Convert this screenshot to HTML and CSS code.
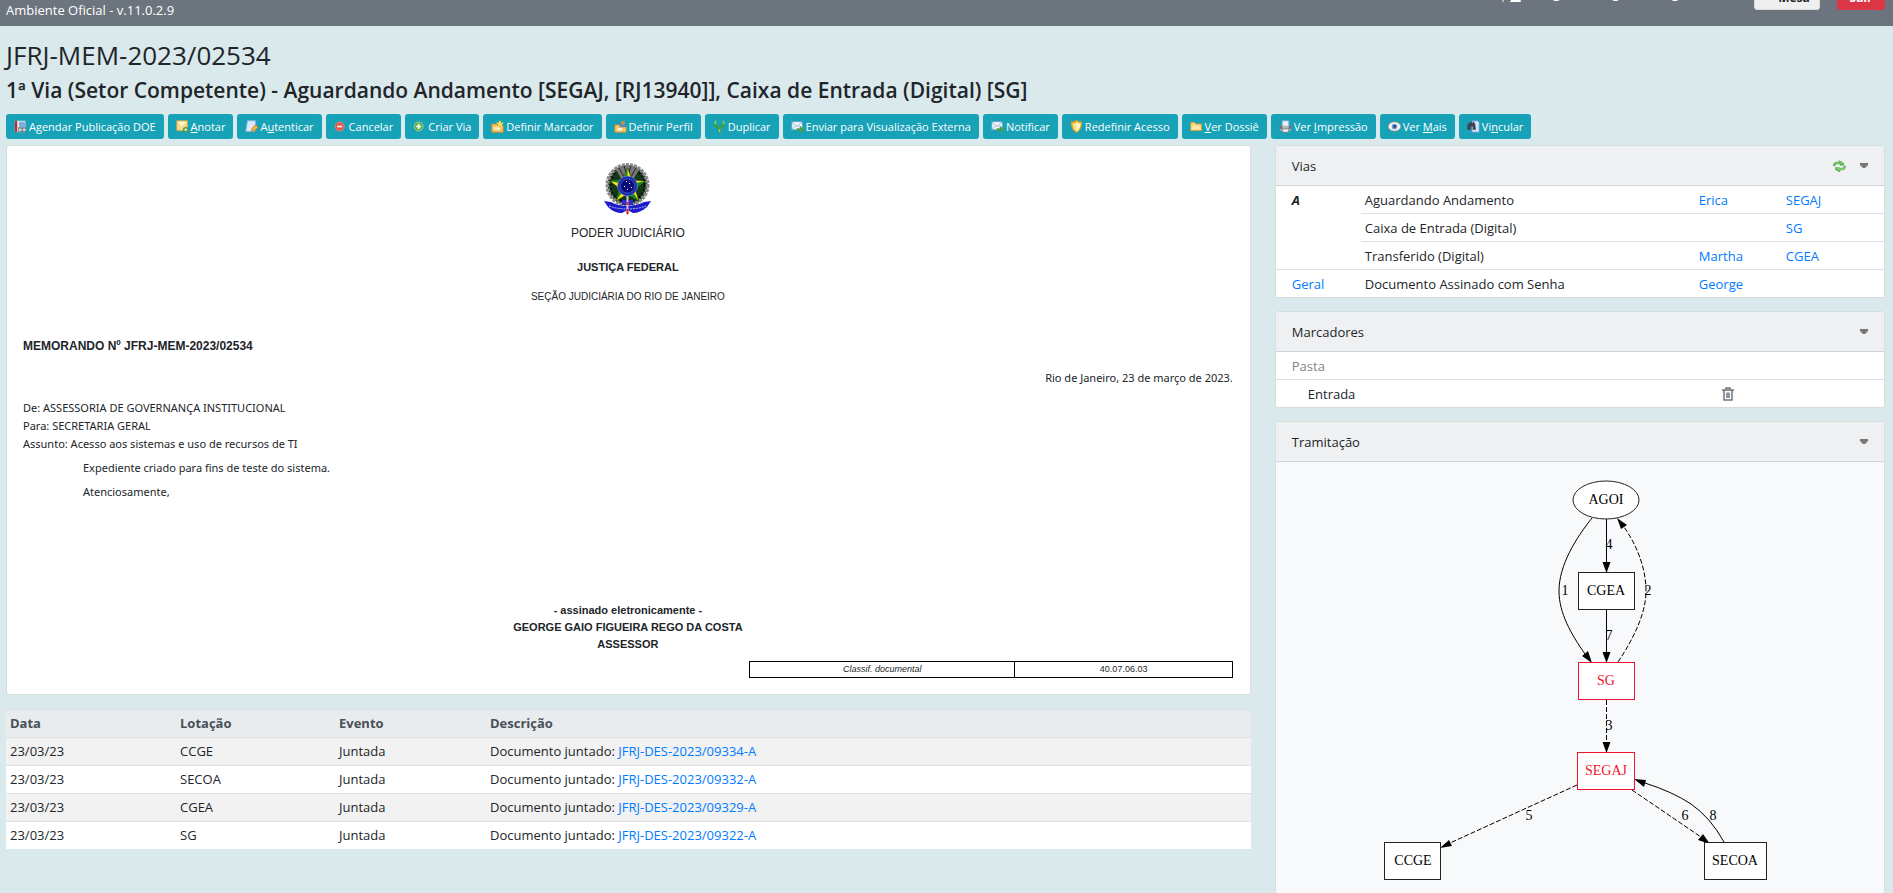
FILE: index.html
```
<!DOCTYPE html>
<html lang="pt-BR">
<head>
<meta charset="utf-8">
<title>JFRJ-MEM-2023/02534</title>
<link rel="stylesheet" href="styles.css">
</head>
<body>
<header class="topbar">
  <span class="env">Ambiente Oficial - v.11.0.2.9</span>
  <div class="user">
    <svg class="user-icon" viewBox="0 0 20 12" aria-hidden="true"><path d="M1 0V12" stroke="#fff"/><path d="M10 8h8l1 4H8z" fill="#fff"/></svg>
    <span class="name"><span>g</span><span>g</span><span>g</span></span>
    <button class="top-btn light" type="button"><svg viewBox="0 0 11 12" aria-hidden="true"><path d="M2 2h7v8h2v2H0v-2h2z" fill="#212529"/></svg><b>Mesa</b></button>
    <button class="top-btn danger" type="button"><b>Sair</b></button>
  </div>
</header>
<main class="page">
  <h1 class="title">JFRJ-MEM-2023/02534</h1>
  <h2 class="subtitle">1ª Via (Setor Competente) - Aguardando Andamento [SEGAJ, [RJ13940]], Caixa de Entrada (Digital) [SG]</h2>
  <nav class="actions">
    <button class="btn" type="button"><svg viewBox="0 0 16 16"><rect x="1" y="1" width="13" height="14" fill="#f4f6f8"/><rect x="1" y="1" width="3" height="14" fill="#b5303a"/><rect x="6" y="2" width="8" height="7" fill="#7fb0d8"/><path d="M5 9h10v6H5z" fill="#6d7680"/><circle cx="7.500" cy="12" r="2" fill="#ccd5dd"/><circle cx="12.500" cy="12" r="2" fill="#ccd5dd"/></svg>Agendar Publicação DOE</button>
    <button class="btn" type="button"><svg viewBox="0 0 16 16"><path d="M1 1h13v12H1z" fill="#f7d88c" stroke="#e5a93c"/><path d="M2 2h11L7 8z" fill="#fdf3d3"/><circle cx="12" cy="12" r="3.500" fill="#4d9b46"/><path d="M12 10v4M10 12h4" stroke="#fff"/></svg><span><u>A</u>notar</span></button>
    <button class="btn" type="button"><svg viewBox="0 0 16 16"><path d="M3 1h10l-1 13H1z" fill="#dbeafc" stroke="#8fb3e0"/><path d="M8 14l1-4 4-4 3 3-4 4z" fill="#f3b53f" stroke="#c77e1f"/></svg><span>A<u>u</u>tenticar</span></button>
    <button class="btn" type="button"><svg viewBox="0 0 16 16"><circle cx="7" cy="8" r="5.500" fill="#e4564c" stroke="#f08a80"/><path d="M4 8h6" stroke="#fff" stroke-width="2"/></svg>Cancelar</button>
    <button class="btn" type="button"><svg viewBox="0 0 16 16"><circle cx="7" cy="8" r="5.500" fill="#5fae50" stroke="#a5d898"/><path d="M4 8h6M7 5v6" stroke="#fff" stroke-width="2"/></svg>Criar Via</button>
    <button class="btn" type="button"><svg viewBox="0 0 16 16"><path d="M1 5h6l1 2h7v8H1z" fill="#f5c767" stroke="#d08b2c"/><path d="M4 9h7v3H4z" fill="#fff3cf"/><path d="M11 0l1.500 3 3.500.5-2.500 2 .5 3.500-3-2-3 2 .5-3.500-2.500-2 3.500-.5z" fill="#fbdc4c"/></svg>Definir Marcador</button>
    <button class="btn" type="button"><svg viewBox="0 0 16 16"><path d="M1 6h6l1 2h7v7H1z" fill="#f5c767" stroke="#d08b2c"/><path d="M4 10h6v3H4z" fill="#fff3cf"/><path d="M7 9q0-4 4-4t4 4z" fill="#5887c4"/><circle cx="11" cy="3.500" r="2.500" fill="#c98a56"/></svg>Definir Perfil</button>
    <button class="btn" type="button"><svg viewBox="0 0 16 16"><path d="M8 15V10Q3 9 3 3M8 10Q13 9 13 3" fill="none" stroke="#3f9f3a" stroke-width="3"/><path d="M3 1v4M13 1v4M8 11v4" stroke="#8ad06a" stroke-width="2"/></svg>Duplicar</button>
    <button class="btn" type="button"><svg viewBox="0 0 16 16"><path d="M1 2h13v10H1z" fill="#f5f9fd" stroke="#6f9bc8"/><path d="M1 2l6 6 7-6M1 12l5-5M14 12L9 7" fill="none" stroke="#7ba3cf"/><path d="M7 10h4V7l5 4.500-5 4.500v-3H7z" fill="#4da043"/></svg>Enviar para Visualização Externa</button>
    <button class="btn" type="button"><svg viewBox="0 0 16 16"><path d="M1 2h13v10H1z" fill="#f5f9fd" stroke="#6f9bc8"/><path d="M1 2l6 6 7-6M1 12l5-5M14 12L9 7" fill="none" stroke="#7ba3cf"/><path d="M7 10h4V7l5 4.500-5 4.500v-3H7z" fill="#4da043"/></svg>Notificar</button>
    <button class="btn" type="button"><svg viewBox="0 0 16 16"><path d="M1 2q4 0 7-2 3 2 7 2 0 10-7 14Q1 12 1 2z" fill="#e0a021"/><path d="M3 4q3 0 5-2 2 2 5 2 0 7-5 10Q3 11 3 4z" fill="#ffe27a"/><path d="M8 2q2 2 5 2 0 7-5 10z" fill="#fff6d0"/></svg>Redefinir Acesso</button>
    <button class="btn" type="button"><svg viewBox="0 0 16 16"><path d="M1 3h5l1 2h7v8H1z" fill="#f8d877" stroke="#dfa532"/><path d="M2 7h11v5H2z" fill="#fce9a6"/></svg><span><u>V</u>er Dossiê</span></button>
    <button class="btn" type="button"><svg viewBox="0 0 16 16"><path d="M4 1h8v7H4z" fill="#e8f1fb" stroke="#8fb0d8"/><path d="M1 7h14v6H1z" fill="#b4b7bd"/><path d="M1 7h3v4H1zM12 7h3v4h-3z" fill="#6b6f78"/><path d="M4 11h8v4H4z" fill="#f4f4f4" stroke="#777"/></svg><span>Ver <u>I</u>mpressão</span></button>
    <button class="btn" type="button"><svg viewBox="0 0 16 16"><ellipse cx="8" cy="8" rx="7.500" ry="5.500" fill="#f8f8f8" stroke="#c9a183"/><circle cx="8" cy="8" r="3.500" fill="#6e9ad6"/><circle cx="8" cy="8" r="1.500" fill="#17335f"/></svg><span>Ver <u>M</u>ais</span></button>
    <button class="btn" type="button"><svg viewBox="0 0 16 16"><path d="M6 1h7l2 2v12H6z" fill="#d5e6fb" stroke="#5f93d3"/><path d="M1 4h3v-2h2v2h1v-2h2v2h1l1 8H7V8H5v4H0z" fill="#3d4552"/></svg><span>Vi<u>n</u>cular</span></button>
  </nav>
  <div class="columns">
    <div class="main-col">
      <article class="card memo">
        <div class="memo-head">
          <svg class="crest" viewBox="0 0 47 52" role="img" aria-label="Brasão da República">
            <circle cx="23.500" cy="22" r="20" fill="#123a17" stroke="#8a8a8a" stroke-width="4" stroke-dasharray="3 1"/>
            <circle cx="23.500" cy="22" r="17" fill="none" stroke="#0b0b0b" stroke-width="2" stroke-dasharray="2 2"/>
            <path d="M12 7Q24-3 35 7L30 15H17z" fill="#777"/><path d="M15 5l5 9M32 5l-5 9M20 3l3 9M27 3l-3 9" stroke="#222"/>
            <path d="M23.500 5L28 17 41 18 31 26 35 38 23.500 31 12 38 16 26 6 18 19 17z" fill="#ffe900" stroke="#222" stroke-width=".5"/>
            <path d="M23.500 5V22L19 17zM41 18L23.500 22 31 26zM35 38L23.500 22V31zM12 38L23.500 22 16 26zM6 18L23.500 22 19 17z" fill="#0a8a2a"/>
            <circle cx="23.500" cy="23" r="10" fill="#1b2fa8" stroke="#8fa0ff" stroke-width=".5"/>
            <circle cx="23.500" cy="23" r="7" fill="#0a0a78" stroke="#5f70e0" stroke-width=".5"/>
            <path d="M22 18h1v1h-1zM25 20h1v1h-1zM20 23h1v1h-1zM27 24h1v1h-1zM23 26h1v1h-1z" fill="#fff"/>
            <path d="M0 38l7 1q7 4 16 4t17-4l7-1-4 6q-7 6-14 6l-5.500-3-5.500 3q-8 0-14-6z" fill="#1c1cc8"/>
            <path d="M5 43q8 3 18.500 3T42 43" fill="none" stroke="#b9c2ff" stroke-dasharray="2 1"/>
            <path d="M18 37h11v5H18z" fill="#2a2ad0"/><path d="M23.500 33V52" stroke="#c9c9e8" stroke-width="2"/><path d="M23.500 39v3M23.500 46v5" stroke="#d22" stroke-width="2"/>
          </svg>
          <p class="h-power">PODER JUDICIÁRIO</p>
          <p class="h-court">JUSTIÇA FEDERAL</p>
          <p class="h-section">SEÇÃO JUDICIÁRIA DO RIO DE JANEIRO</p>
        </div>
        <p class="memo-no">MEMORANDO Nº JFRJ-MEM-2023/02534</p>
        <p class="memo-date">Rio de Janeiro, 23 de março de 2023.</p>
        <div class="memo-meta">
          <p>De: ASSESSORIA DE GOVERNANÇA INSTITUCIONAL</p>
          <p>Para: SECRETARIA GERAL</p>
          <p>Assunto: Acesso aos sistemas e uso de recursos de TI</p>
        </div>
        <div class="memo-text">
          <p>Expediente criado para fins de teste do sistema.</p>
          <p>Atenciosamente,</p>
        </div>
        <div class="sign">
          <p>- assinado eletronicamente -</p>
          <p>GEORGE GAIO FIGUEIRA REGO DA COSTA</p>
          <p>ASSESSOR</p>
        </div>
        <table class="classif"><tr><td class="c-name">Classif. documental</td><td>40.07.06.03</td></tr></table>
      </article>
      <table class="events">
        <colgroup><col class="e1"><col class="e2"><col class="e3"><col></colgroup>
        <thead><tr><th>Data</th><th>Lotação</th><th>Evento</th><th>Descrição</th></tr></thead>
        <tbody>
          <tr><td>23/03/23</td><td>CCGE</td><td>Juntada</td><td>Documento juntado: <a href="#d1">JFRJ-DES-2023/09334-A</a></td></tr>
          <tr><td>23/03/23</td><td>SECOA</td><td>Juntada</td><td>Documento juntado: <a href="#d2">JFRJ-DES-2023/09332-A</a></td></tr>
          <tr><td>23/03/23</td><td>CGEA</td><td>Juntada</td><td>Documento juntado: <a href="#d3">JFRJ-DES-2023/09329-A</a></td></tr>
          <tr><td>23/03/23</td><td>SG</td><td>Juntada</td><td>Documento juntado: <a href="#d4">JFRJ-DES-2023/09322-A</a></td></tr>
        </tbody>
      </table>
    </div>
    <aside class="side-col">
      <section class="card">
        <div class="card-head"><h3>Vias</h3>
          <svg class="refresh" viewBox="0 0 13 12" aria-hidden="true"><path d="M0 5Q1 1 5 2l1-2 5 3v2H7L5 4Q3 4 2 6z" fill="#6fbf6a"/><path d="M13 7q-1 4-5 3l-1 2-5-3V7h4l2 1q2 0 3-2z" fill="#7cc573"/><path d="M0 5l2 1M7 5h4M2 9l5 3M11 6l2 1" stroke="#4f9a50"/></svg>
          <svg class="caret" viewBox="0 0 8 6" aria-hidden="true"><path d="M0 0H8V2L5 5H3L0 2z"/></svg></div>
        <table class="list vias">
          <colgroup><col class="v1"><col class="v2"><col class="v3"><col></colgroup>
          <tr><td class="lead" rowspan="3"><b><i>A</i></b></td><td>Aguardando Andamento</td><td><a href="#u1">Erica</a></td><td><a href="#s1">SEGAJ</a></td></tr>
          <tr><td>Caixa de Entrada (Digital)</td><td></td><td><a href="#s2">SG</a></td></tr>
          <tr><td>Transferido (Digital)</td><td><a href="#u3">Martha</a></td><td><a href="#s3">CGEA</a></td></tr>
          <tr><td class="lead"><a href="#g">Geral</a></td><td>Documento Assinado com Senha</td><td><a href="#u4">George</a></td><td></td></tr>
        </table>
      </section>
      <section class="card">
        <div class="card-head"><h3>Marcadores</h3><svg class="caret" viewBox="0 0 8 6" aria-hidden="true"><path d="M0 0H8V2L5 5H3L0 2z"/></svg></div>
        <table class="list marks">
          <colgroup><col class="m1"><col></colgroup>
          <tr><td class="lead muted" colspan="2">Pasta</td></tr>
          <tr><td class="indent">Entrada</td><td><button class="trash" type="button" aria-label="Remover"><svg viewBox="0 0 12 14"><path d="M0 3H12M4 3V1H8V3M2 3V13H10V3M5 5.500V11M7 5.500V11" fill="none" stroke="#6c757d" stroke-width="1.500"/></svg></button></td></tr>
        </table>
      </section>
      <section class="card flow">
        <div class="card-head"><h3>Tramitação</h3><svg class="caret" viewBox="0 0 8 6" aria-hidden="true"><path d="M0 0H8V2L5 5H3L0 2z"/></svg></div>
        <svg class="graph" viewBox="0 0 408 424" role="img" aria-label="Tramitação do documento">
          <g class="edge">
            <path d="M216 56C200 76 183 103 183 129C183 151 195 172 209 192"/>
            <path d="M230.500 57V100M230.500 147V190"/>
            <path d="M348 380Q334 355 315 342Q297 330 269 321"/>
            <g class="dash"><path d="M242 200C258 176 270 151 270 129C270 105 260 82 248 65"/><path d="M230.500 238V281"/><path d="M201 323L74 381"/><path d="M256 328L325 375"/></g>
          </g>
          <path d="M216 201L206 194L212 189zM230.500 111L226.500 100H234.500zM230.500 201L226.500 190H234.500zM230.500 291L226.500 280H234.500zM241 56L245 67L251 63zM64 386L76 384L73 378zM334 382L327 372L322 378zM258 317L270 318L268 325z"/>
          <ellipse class="node" cx="230" cy="38" rx="33" ry="19"/>
          <g class="node"><rect x="202.500" y="110.500" width="56" height="37"/><rect x="8.500" y="380.500" width="56" height="37"/><rect x="328.500" y="380.500" width="62" height="37"/></g>
          <g class="node red"><rect x="202.500" y="200.500" width="56" height="37"/><rect x="201.500" y="290.500" width="57" height="37"/></g>
          <g class="label"><text x="230" y="42">AGOI</text><text x="230" y="133">CGEA</text><text class="hot" x="230" y="223">SG</text><text class="hot" x="230" y="313">SEGAJ</text><text x="37" y="403">CCGE</text><text x="359" y="403">SECOA</text>
          <text x="189" y="133">1</text><text x="272" y="133">2</text><text x="233" y="268">3</text><text x="233" y="87">4</text><text x="153" y="358">5</text><text x="309" y="358">6</text><text x="233" y="178">7</text><text x="337" y="358">8</text></g>
        </svg>
      </section>
    </aside>
  </div>
</main>
</body>
</html>
```
FILE: styles.css
```
* { box-sizing: border-box; }
body {
  margin: 0;
  min-height: 100vh;
  display: flex;
  flex-direction: column;
  background: #dae9ec;
  color: #212529;
  font: 13px/20px "Open Sans", "Noto Sans", sans-serif;
}
h1, h2, h3, p { margin: 0; }
a { color: #007bff; text-decoration: none; }
table { border-collapse: collapse; }
td, th { text-align: left; vertical-align: top; }

.topbar {
  height: 26px;
  padding: 0 8px 0 6px;
  display: flex;
  justify-content: space-between;
  overflow: hidden;
  background: #6c757d;
  color: #fff;
}
.env { line-height: 20px; }
.user { display: flex; align-items: flex-start; margin-top: -17px; }
.user-icon { width: 20px; height: 12px; margin: 7px 31px 0 0; }
.name { display: flex; gap: 52px; margin-right: 75px; font-weight: 700; }
.top-btn {
  display: flex;
  justify-content: center;
  align-items: flex-end;
  gap: 3px;
  height: 27px;
  border: 1px solid #d8dcdf;
  border-radius: 3px;
  font: 12px/16px "Open Sans", sans-serif;
}
.top-btn svg { width: 11px; height: 12px; margin-bottom: 6px; }
.light { width: 66px; margin-right: 17px; padding: 0 6px 3px; background: #efefef; color: #212529; }
.danger { width: 48px; padding: 0 0 3px; background: #dc3545; border-color: #dc3545; color: #fff; }

.page { flex: 1; display: flex; flex-direction: column; padding: 13px 8px 0 6px; }
.title { font-size: 26px; line-height: 32px; font-weight: 400; }
.subtitle { font-size: 21px; line-height: 24px; margin: 7px 0 12px; font-weight: 600; }
.actions { display: flex; flex-wrap: wrap; gap: 4px; }
.btn {
  display: flex;
  align-items: center;
  gap: 2px;
  height: 25px;
  padding: 0 8px;
  border: 0;
  border-radius: 3px;
  background: #17a2b8;
  color: #fff;
  font: 11px/16px "Open Sans", sans-serif;
}
.btn svg { width: 13px; height: 13px; }

.columns { flex: 1; display: grid; grid-template-columns: 102fr 50fr; gap: 24px; margin-top: 6px; }
.main-col { display: flex; flex-direction: column; gap: 14px; }
.side-col { display: flex; flex-direction: column; gap: 13px; }
.card { background: #fff; border: 1px solid #d9dcdd; border-radius: 3px; }

.memo { padding: 17px 17px 16px 16px; font: 11px/17px "Noto Sans", sans-serif; }
.memo-head { display: flex; flex-direction: column; align-items: center; font-family: "Liberation Sans", sans-serif; }
.crest { width: 47px; height: 52px; }
.h-power { margin-top: 10px; font-size: 12px; }
.h-court { margin-top: 17px; font-weight: 700; }
.h-section { margin-top: 12px; font-size: 10px; }
.memo-no { margin-top: 33px; font-family: "Liberation Sans", sans-serif; font-size: 12px; font-weight: 700; }
.memo-date { margin-top: 14px; text-align: right; }
.memo-meta { margin-top: 13px; }
.memo-meta p { line-height: 18px; }
.memo-text { margin: 6px 0 0 60px; }
.memo-text p { margin-bottom: 7px; }
.sign { margin-top: 102px; text-align: center; font-family: "Liberation Sans", sans-serif; font-weight: 700; }
.classif { width: 40%; margin: 8px 0 0 auto; font: 9px/15px "Liberation Sans", sans-serif; }
.classif td { border: 1px solid #000; padding: 0; text-align: center; }
.classif .c-name { width: 55%; font-style: italic; }

.events { width: 100%; table-layout: fixed; }
.events th, .events td { padding: 4px; line-height: 19px; border-top: 1px solid #dee2e6; }
.events th { background: #e9ecef; color: #495057; font-weight: 700; }
.events tbody tr { background: #fff; }
.events tbody tr:nth-child(odd) { background: #f2f2f2; }
.e1 { width: 170px; }
.e2 { width: 159px; }
.e3 { width: 151px; }

.card-head {
  display: flex;
  align-items: center;
  gap: 14px;
  height: 40px;
  padding: 0 16px;
  border-bottom: 1px solid #d2d5d7;
  background: #eff0f2;
}
.card-head h3 { flex: 1; font-size: 13px; font-weight: 400; }
.refresh { width: 13px; height: 12px; }
.caret { width: 8px; height: 6px; fill: #777; }
.list { width: 100%; table-layout: fixed; }
.list td { padding: 5px 4px 3px; line-height: 19px; border-top: 1px solid #dee2e6; }
.list tr:first-child td { border-top: 0; }
.list .lead { padding-left: 16px; }
.v1 { width: 85px; }
.v2 { width: 334px; }
.v3 { width: 87px; }
.m1 { width: 442px; }
.list .muted { color: #868686; }
.list .indent { padding-left: 32px; }
.trash { display: block; padding: 0; border: 0; background: none; }
.trash svg { display: block; width: 12px; height: 14px; margin: 2px 0; }

.flow { flex: 1; background: #f8f9fa; border-bottom: 0; border-radius: 3px 3px 0 0; }
.graph { display: block; width: 408px; max-width: 100%; margin: 0 auto; }
.edge { fill: none; stroke: #000; }
.dash { stroke-dasharray: 5 2; }
.node { fill: #fff; stroke: #222; }
.red { stroke: #f0142f; }
.label { font: 14px "Liberation Serif", serif; text-anchor: middle; }
.hot { fill: #f0142f; }
```
